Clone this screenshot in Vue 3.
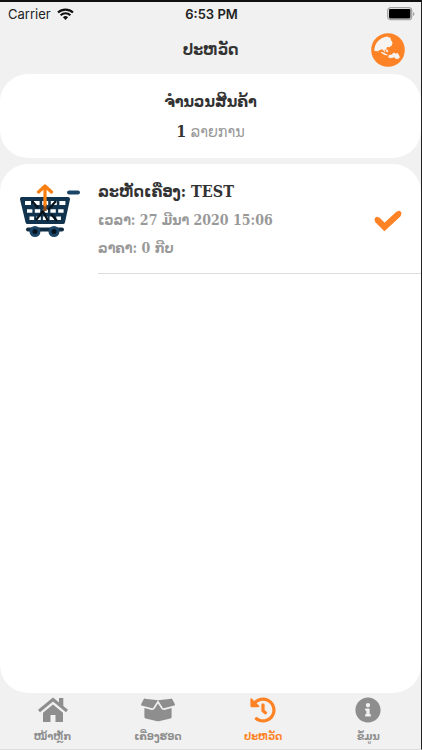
<script setup>
const tabs = [
  { id: 'home', label: 'ໜ້າຫຼັກ', active: false },
  { id: 'box', label: 'ເຄື່ອງຮອດ', active: false },
  { id: 'history', label: 'ປະຫວັດ', active: true },
  { id: 'info', label: 'ຂໍ້ມູນ', active: false },
]
</script>

<template>
  <div class="screen">
    <div class="status">
      <div class="carrier">
        <span>Carrier</span>
        <svg class="wifi" viewBox="0 0 17 12" aria-hidden="true">
          <path d="M1 4.6a11 11 0 0 1 15 0M3.6 7.3a7 7 0 0 1 9.800 0" fill="none" stroke="#111" stroke-width="2.100" />
          <path d="M8.500 12L5.900 9.300a3.700 3.700 0 0 1 5.200 0z" fill="#111" />
        </svg>
      </div>
      <strong class="clock">6:53 PM</strong>
      <svg class="battery" viewBox="0 0 28 14" aria-hidden="true">
        <rect x="0.700" y="0.700" width="24" height="12" rx="3" fill="#eee" stroke="#a5a5a5" stroke-width="1.300" />
        <rect x="2" y="2" width="21.400" height="9.400" rx="1.300" fill="#000" />
        <path d="M26 5v4q1.500-.6 1.500-2T26 5z" fill="#a5a5a5" />
      </svg>
    </div>

    <header class="header">
      <h1>ປະຫວັດ</h1>
      <button class="globe" type="button" aria-label="Language">
        <svg viewBox="0 0 33 33" aria-hidden="true">
          <circle cx="16.500" cy="16.500" r="16.300" fill="#fd8326" />
          <path d="M3.200 17.500C3 10 8.500 4 16 3.300l1.500 1.400 1-.9 1 3.200 1.500 2.500-1 2.800-2.300 1.600-2.200-.2-.6 2-1.800.7 1.300 2.300-1.400-.5-2-2.400-2.600.6-1.400 1.400zM10 18.200l3 1.300 3.200 1.500-.5.900-3-.8-3-2zM14 15.200l2.500 1.500.2 2-1.700-.5zM16.600 23.500l.8-2.200 3-.4 1-1.600 1.900-.2.800 1.300 1.400-1.300 2 3 .5 1.700-1.700 1.400-2.500-.2-1.200-1.500-3.500.9z" fill="#f6f3f0" />
        </svg>
      </button>
    </header>

    <main class="content">
      <section class="summary">
        <h2>ຈຳນວນສິນຄ້າ</h2>
        <p><b>1</b> ລາຍການ</p>
      </section>

      <section class="list">
        <article class="item">
          <svg class="cart" viewBox="0 0 62 56" aria-hidden="true">
            <path d="M2 15h46l-5 23H7.500z" fill="#12334d" stroke="#12334d" stroke-width="4" stroke-linejoin="round" />
            <path d="M5 19h41" stroke="#fff" stroke-width="3.800" stroke-dasharray="6 2.600" />
            <path d="M7 27h37" stroke="#fff" stroke-width="3.600" stroke-dasharray="5.400 2.400" />
            <path d="M9.500 34.300h32" stroke="#fff" stroke-width="3.400" stroke-dasharray="4.600 2.100" />
            <path d="M12 17l6 7M16 36l7-9 5 10M36 17l-8 9M37 37l-6-7" fill="none" stroke="#06121c" stroke-width="2.200" />
            <path d="M49 8.500h9" stroke="#1b4566" stroke-width="4" stroke-linecap="round" />
            <path d="M8 45.500h34" stroke="#102c42" stroke-width="4" stroke-linecap="round" />
            <circle cx="15" cy="47.500" r="5.500" fill="#1b4566" /><circle cx="34" cy="47.500" r="5.500" fill="#1b4566" />
            <circle cx="15" cy="47.500" r="2.500" fill="#06121c" /><circle cx="34" cy="47.500" r="2.500" fill="#06121c" />
            <path d="M25 20v7" stroke="#8a4a1c" stroke-width="3.200" />
            <path d="M25 21V2.500M18.500 8L25 2l6.500 6" fill="none" stroke="#f97f13" stroke-width="3.200" stroke-linecap="round" stroke-linejoin="round" />
          </svg>
          <div class="details">
            <div class="copy">
              <h3>ລະຫັດເຄື່ອງ: TEST</h3>
              <p>ເວລາ: 27 ມີນາ 2020 15:06</p>
              <p>ລາຄາ: 0 ກີບ</p>
            </div>
            <svg class="check" viewBox="0 0 30 23" aria-hidden="true">
              <path d="M4 10.500l7.500 7.500L26 4.500" fill="none" stroke="#fd8326" stroke-width="6.200" />
              <path d="M4 10.500l7.500 7.500L26 4.500" fill="none" stroke="#fd8326" stroke-width="5" stroke-linecap="round" />
            </svg>
          </div>
        </article>
      </section>
    </main>

    <nav class="tabs">
      <a v-for="tab in tabs" :key="tab.id" :href="'#' + tab.id" :class="{ active: tab.active }">
        <svg v-if="tab.id === 'home'" viewBox="0 0 30 26" aria-hidden="true">
          <path d="M15 7.500L5 15.800V25h7.500v-7h5v7H25v-9.200z" />
          <path d="M1 14L15 2.500 29 14" fill="none" stroke="currentColor" stroke-width="3" />
          <path d="M21 1h4.300v8.500L21 6z" />
        </svg>
        <svg v-else-if="tab.id === 'box'" class="wide" viewBox="0 0 640 512" preserveAspectRatio="none" aria-hidden="true">
          <path d="M425.700 256c-16.900 0-32.800-9-41.400-23.400L320 126l-64.200 106.600c-8.700 14.500-24.600 23.500-41.500 23.500-4.500 0-9-.6-13.300-1.900L64 215v178c0 14.700 10 27.500 24.200 31l216.200 54.100c10.200 2.500 20.900 2.500 31 0L551.800 424c14.200-3.600 24.200-16.400 24.200-31V215l-137 39.100c-4.300 1.300-8.800 1.900-13.300 1.900zm212.600-112.200L586.800 41c-3.100-6.200-9.800-9.800-16.700-8.900L320 64l91.700 152.100c3.800 6.300 11.400 9.300 18.500 7.300l197.900-56.500c9.900-2.900 14.700-13.900 10.200-23.100zM53.200 41L1.700 143.800c-4.600 9.200.3 20.200 10.100 23l197.900 56.500c7.100 2 14.700-1 18.500-7.300L320 64 69.800 32.100c-6.900-.8-13.500 2.700-16.600 8.900z" />
        </svg>
        <svg v-else-if="tab.id === 'history'" viewBox="0 0 512 512" aria-hidden="true">
          <path d="M504 255.531c.253 136.640-111.180 248.372-247.820 248.468-59.015.042-113.223-20.530-155.822-54.911-11.077-8.940-11.905-25.541-1.839-35.607l11.267-11.267c8.609-8.609 22.353-9.551 31.891-1.984C173.062 425.135 212.781 440 256 440c101.705 0 184-82.311 184-184 0-101.705-82.311-184-184-184-48.814 0-93.149 18.969-126.068 49.932l50.754 50.754c10.080 10.080 2.941 27.314-11.313 27.314H24c-8.837 0-16-7.163-16-16V38.627c0-14.254 17.234-21.393 27.314-11.314l49.372 49.372C129.209 34.136 189.552 8 256 8c136.810 0 247.747 110.780 248 247.531zm-180.912 78.784l9.823-12.630c8.138-10.463 6.253-25.542-4.210-33.679L288 256.349V152c0-13.255-10.745-24-24-24h-16c-13.255 0-24 10.745-24 24v135.651l65.409 50.874c10.463 8.137 25.541 6.253 33.679-4.210z" />
        </svg>
        <svg v-else viewBox="0 0 512 512" aria-hidden="true">
          <path d="M256 8C119.043 8 8 119.083 8 256c0 136.997 111.043 248 248 248s248-111.003 248-248C504 119.083 392.957 8 256 8zm0 110c23.196 0 42 18.804 42 42s-18.804 42-42 42-42-18.804-42-42 18.804-42 42-42zm56 254c0 6.627-5.373 12-12 12h-88c-6.627 0-12-5.373-12-12v-24c0-6.627 5.373-12 12-12h12v-64h-12c-6.627 0-12-5.373-12-12v-24c0-6.627 5.373-12 12-12h64c6.627 0 12 5.373 12 12v100h12c6.627 0 12 5.373 12 12v24z" />
        </svg>
        <span>{{ tab.label }}</span>
      </a>
    </nav>
  </div>
</template>

<style>
body {
  background: #f1f1f1;
}
</style>

<style scoped>
.screen {
  box-sizing: border-box;
  min-height: 100vh;
  display: flex;
  flex-direction: column;
  background: #f1f1f1;
  border-top: 2px solid #111;
  border-right: 1px solid #222;
  border-bottom: 1px solid #ddd;
  font-family: "DejaVu Serif Condensed", "DejaVu Sans Condensed", "DejaVu Sans", serif;
  color: #333;
}
h1, h2, h3, p {
  margin: 0;
}
.status {
  display: grid;
  grid-template-columns: 1fr auto 1fr;
  align-items: center;
  height: 24px;
  padding: 0 6px 0 8px;
  font-family: Inter, sans-serif;
  font-size: 13px;
  color: #222;
}
.carrier {
  display: flex;
  align-items: center;
  gap: 6px;
}
.wifi {
  width: 17px;
  height: 12px;
}
.clock {
  font-size: 13px;
  font-weight: 600;
}
.battery {
  justify-self: end;
  width: 28px;
  height: 14px;
}
.header {
  display: grid;
  grid-template-columns: 1fr auto 1fr;
  align-items: center;
  height: 48px;
  padding: 0 16px;
}
h1 {
  grid-column: 2;
  font-size: 16px;
  line-height: 24px;
}
.globe {
  justify-self: end;
  width: 34px;
  height: 34px;
  padding: 0;
  border: 0;
  background: none;
}
.globe svg {
  display: block;
}
.content {
  flex: 1;
  display: flex;
  flex-direction: column;
  gap: 6px;
}
.summary {
  padding: 16px 16px 12px;
  border-radius: 28px;
  background: #fff;
  text-align: center;
}
h2 {
  font-size: 16px;
  line-height: 24px;
}
.summary p {
  padding-top: 4px;
  font-size: 16px;
  line-height: 28px;
  color: #999;
}
.summary b {
  color: #333;
}
.list {
  flex: 1;
  border-radius: 28px;
  background: #fff;
}
.item {
  display: flex;
  gap: 16px;
  padding: 14px 0 0 20px;
}
.cart {
  flex: none;
  width: 62px;
  height: 56px;
  margin-top: 6px;
}
.details {
  flex: 1;
  display: flex;
  align-items: center;
  justify-content: space-between;
  padding: 0 18px 11px 0;
  border-bottom: 1px solid #ddd;
}
h3 {
  font-size: 16px;
  line-height: 28px;
}
.copy p {
  font-size: 14px;
  font-weight: 700;
  line-height: 28px;
  color: #999;
}
.check {
  width: 30px;
  height: 23px;
}
.tabs {
  display: grid;
  grid-template-columns: repeat(4, 1fr);
  height: 56px;
}
.tabs a {
  display: flex;
  flex-direction: column;
  align-items: center;
  gap: 4px;
  padding-top: 4px;
  font-size: 11px;
  font-weight: 700;
  line-height: 20px;
  color: #8e8e8e;
  text-decoration: none;
}
.tabs svg {
  width: 30px;
  height: 26px;
  fill: currentColor;
}
.tabs .wide {
  width: 34px;
}
.tabs .active {
  color: #fd8326;
}
</style>
